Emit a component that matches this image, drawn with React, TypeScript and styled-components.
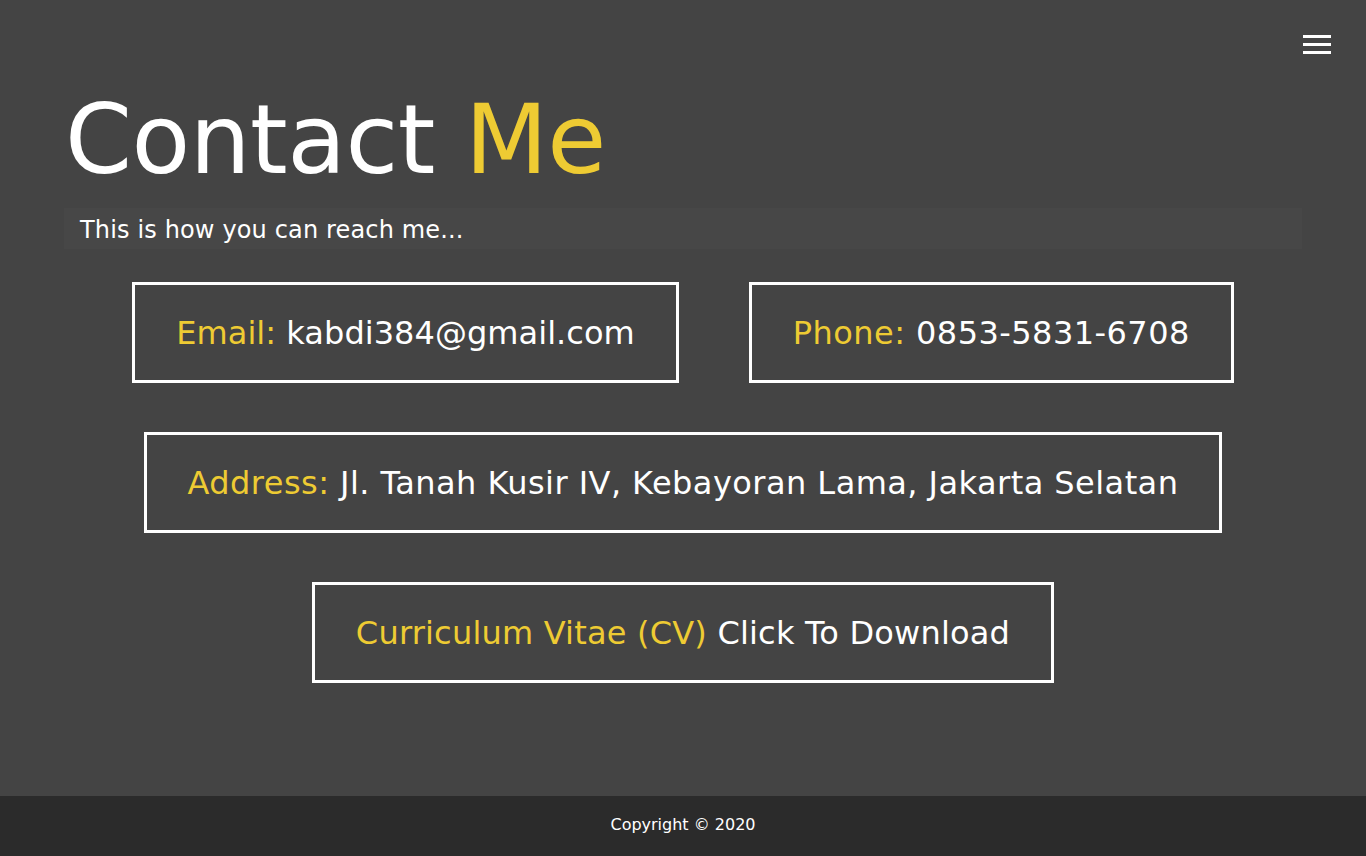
import React from "react";
import styled, { createGlobalStyle } from "styled-components";

const GlobalStyle = createGlobalStyle`
  html, body {
    margin: 0;
    padding: 0;
    background: #444444;
  }
  body {
    font-family: "DejaVu Sans", Verdana, sans-serif;
    color: #ffffff;
  }
  * { box-sizing: border-box; }
`;

const Page = styled.div`
  min-height: 856px;
  display: flex;
  flex-direction: column;
  background: #444444;
`;

const Main = styled.main`
  flex: 1;
  display: flex;
  flex-direction: column;
`;

const Header = styled.header`
  display: flex;
  justify-content: flex-end;
  padding: 35px 35px 0;
`;

const Burger = styled.button`
  display: flex;
  flex-direction: column;
  gap: 5px;
  padding: 0;
  background: none;
  border: none;
  cursor: pointer;
`;

const BurgerBar = styled.span`
  display: block;
  width: 28px;
  height: 3px;
  background: #ffffff;
`;

const Intro = styled.section`
  padding: 0 64px;
  margin-top: 30px;
`;

const Title = styled.h1`
  margin: 0 0 0 1px;
  font-size: 96px;
  font-weight: 400;
  line-height: 112px;
  letter-spacing: -0.5px;
  color: #ffffff;
`;

const Accent = styled.span`
  color: #eecb33;
`;

const Subtitle = styled.p`
  margin: 12px 0 0;
  padding: 8px 16px 4px;
  font-size: 24px;
  line-height: 29px;
  letter-spacing: 0.15px;
  background: #474747;
  color: #ffffff;
`;

const Cards = styled.section`
  display: flex;
  flex-direction: column;
  align-items: center;
  gap: 49px;
  margin-top: 33px;
`;

const CardRow = styled.div`
  display: flex;
  justify-content: center;
  gap: 70px;
`;

const Card = styled.a<{ $spacing?: number }>`
  display: block;
  border: 3px solid #ffffff;
  padding: 30px 41px 28px;
  font-size: 32px;
  line-height: 37px;
  letter-spacing: ${(p) => (p.$spacing ?? 0.3)}px;
  color: #ffffff;
  text-decoration: none;
  white-space: nowrap;
`;

const Label = styled.span`
  color: #eecb33;
`;

const Footer = styled.footer`
  height: 60px;
  padding-bottom: 4px;
  background: #2b2b2b;
  display: flex;
  align-items: center;
  justify-content: center;
  font-size: 16px;
  color: #ffffff;
`;

export default function App() {
  return (
    <>
      <GlobalStyle />
      <Page>
        <Main>
          <Header>
            <Burger aria-label="menu">
              <BurgerBar />
              <BurgerBar />
              <BurgerBar />
            </Burger>
          </Header>
          <Intro>
            <Title>
              Contact <Accent>Me</Accent>
            </Title>
            <Subtitle>This is how you can reach me...</Subtitle>
          </Intro>
          <Cards>
            <CardRow>
              <Card href="#" $spacing={0.05}>
                <Label>Email:</Label> kabdi384@gmail.com
              </Card>
              <Card href="#" $spacing={0.45}>
                <Label>Phone:</Label> 0853-5831-6708
              </Card>
            </CardRow>
            <Card href="#" $spacing={0.45}>
              <Label>Address:</Label> Jl. Tanah Kusir IV, Kebayoran Lama, Jakarta Selatan
            </Card>
            <Card href="#" $spacing={0.2}>
              <Label>Curriculum Vitae (CV)</Label> Click To Download
            </Card>
          </Cards>
        </Main>
        <Footer>Copyright © 2020</Footer>
      </Page>
    </>
  );
}
